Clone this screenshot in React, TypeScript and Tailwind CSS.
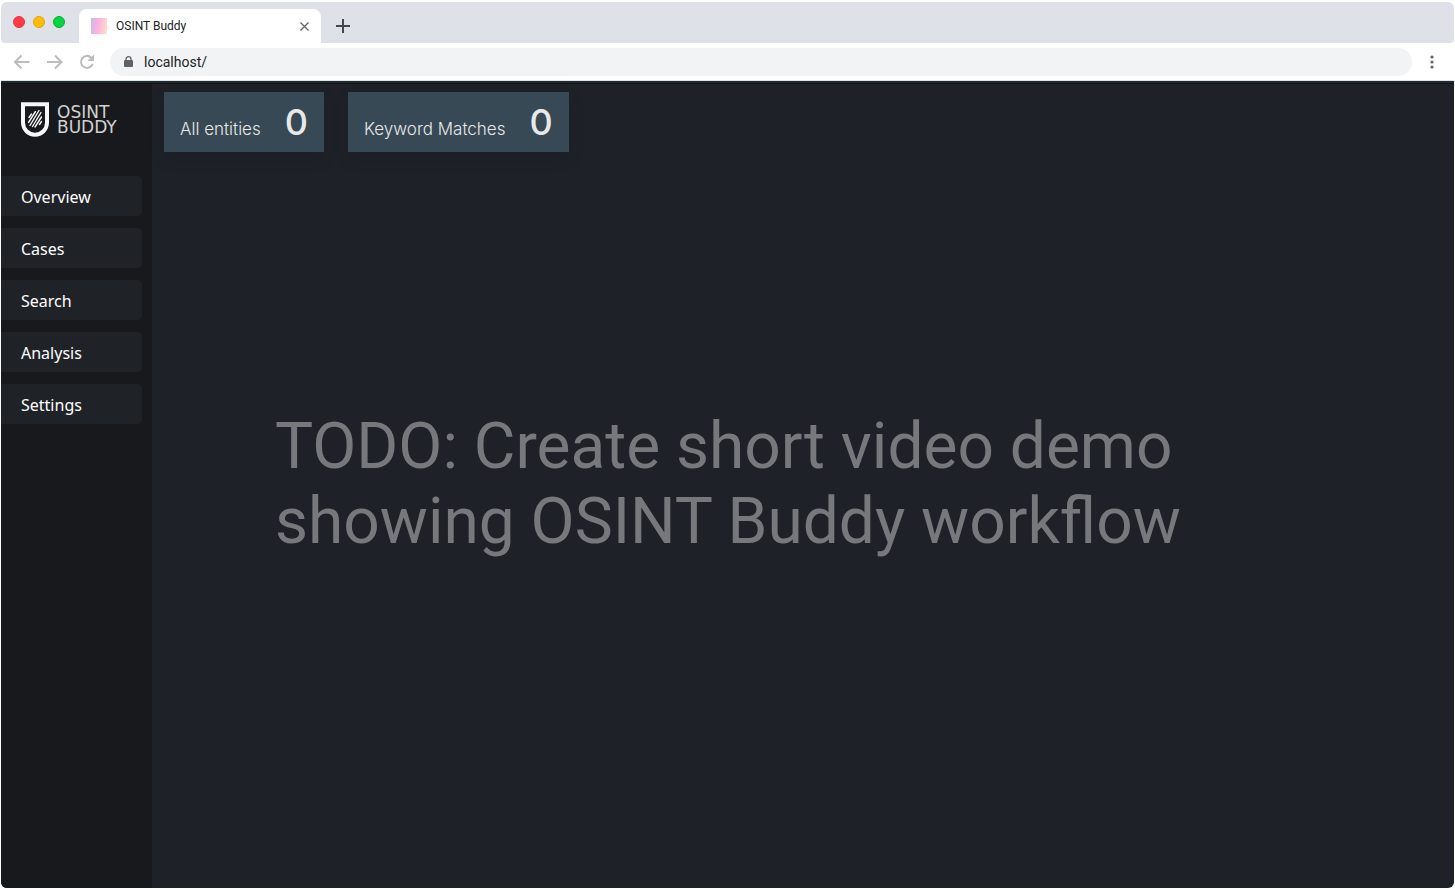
import React from "react";

const navItems = ["Overview", "Cases", "Search", "Analysis", "Settings"];

const stats = [
  { label: "All entities", value: 0 },
  { label: "Keyword Matches", value: 0 },
];

function TitleBar() {
  return (
    <div className="bg-white">
      <div className="flex h-[41px] items-end rounded-t-md rounded-b bg-[#dee1e8]">
        <div className="flex h-full w-[78px] shrink-0 items-start gap-2 pt-[14px] pl-3">
          <span className="size-3 rounded-full border border-[#e2343f] bg-[#ff3b47]" />
          <span className="size-3 rounded-full border border-[#e1a116] bg-[#ffbd00]" />
          <span className="size-3 rounded-full border border-[#12ac28] bg-[#00d742]" />
        </div>
        <div className="flex h-[34px] w-[242px] items-center rounded-t-lg bg-white px-3">
          <span className="size-4 bg-linear-100 from-[#c9b8ec] via-[#ffb3dd] to-[#ffe3c4]" />
          <span className="ml-[9px] text-[12px] leading-4 text-[#202124]">OSINT Buddy</span>
          <button type="button" aria-label="Close tab" className="ml-auto">
            <svg width="9" height="9" viewBox="0 0 9 9" stroke="#5f6368" strokeWidth="1.2">
              <path d="M0.5 0.5 8.5 8.5M8.5 0.5 0.5 8.5" />
            </svg>
          </button>
        </div>
        <div className="flex h-[34px] items-center pl-[15px]">
          <button type="button" aria-label="New tab">
            <svg width="14" height="14" viewBox="0 0 14 14" stroke="#45484d" strokeWidth="2">
              <path d="M7 0V14M0 7H14" />
            </svg>
          </button>
        </div>
      </div>
    </div>
  );
}

function Toolbar() {
  return (
    <div className="flex h-[38px] items-center border-b border-[#d5e6e9] bg-white pr-5 pl-3">
      <div className="flex w-[97px] shrink-0 items-center gap-4">
        <button type="button" aria-label="Back">
          <svg width="17" height="16" viewBox="0 0 17 16" fill="none" stroke="#babcbe" strokeWidth="2">
            <path d="M16.5 8H2.5M8.5 1.5 2 8 8.5 14.5" />
          </svg>
        </button>
        <button type="button" aria-label="Forward">
          <svg width="17" height="16" viewBox="0 0 17 16" fill="none" stroke="#babcbe" strokeWidth="2">
            <path d="M1 8H15M9 1.5 15.5 8 9 14.5" />
          </svg>
        </button>
        <button type="button" aria-label="Reload">
          <svg width="16" height="16" viewBox="0 0 16 16" fill="none" stroke="#babcbe" strokeWidth="2">
            <path d="M13.7 9.7A6 6 0 1 1 12.3 3.7L13.5 5" />
            <path d="M15 0.5V7H8.5Z" fill="#babcbe" stroke="none" />
          </svg>
        </button>
      </div>
      <div className="flex h-7 flex-1 items-center rounded-full bg-[#f1f3f4] pl-[14px]">
        <svg width="9" height="12" viewBox="0 0 9 12" aria-hidden="true">
          <path d="M2 5V3.2a2.5 2.5 0 0 1 5 0V5" fill="none" stroke="#5f6368" strokeWidth="1.3" />
          <rect x="0" y="4" width="9" height="7" rx="1" fill="#5f6368" />
        </svg>
        <input
          type="text"
          aria-label="Address"
          defaultValue="localhost/"
          className="ml-[11px] min-w-0 flex-1 bg-transparent text-[14px] leading-5 text-[#202124] outline-none"
        />
      </div>
      <button type="button" aria-label="Menu" className="ml-[18px]">
        <svg width="4" height="14" viewBox="0 0 4 14" fill="#5f6368">
          <circle cx="2" cy="2" r="1.6" />
          <circle cx="2" cy="7" r="1.6" />
          <circle cx="2" cy="12" r="1.6" />
        </svg>
      </button>
    </div>
  );
}

function Logo() {
  return (
    <a href="#" className="flex items-center gap-2">
      <svg width="28" height="35" viewBox="0 0 28 35" fill="none" aria-hidden="true">
        <path
          d="M2 2.3H26V20.5C26 27.5 20.5 32.7 14 32.7S2 27.5 2 20.5Z"
          stroke="#f7f7f7"
          strokeWidth="4"
        />
        <path
          d="M8 15.5 10.5 12M7.5 20.5 14.5 9.5M9 23.5 18 8.5M11.500 24.500 20 10.500M14 25 20.500 15M18.500 22.500 20.500 19.500"
          stroke="#f7f7f7"
          strokeWidth="1.4"
          strokeLinecap="round"
        />
      </svg>
      <span className="flex flex-col font-['DejaVu_Sans',sans-serif] text-[17px] leading-[15px] text-[#d2d2d0]">
        <span>OSINT</span>
        <span>BUDDY</span>
      </span>
    </a>
  );
}

function Sidebar() {
  return (
    <aside className="w-[151px] shrink-0 bg-[#17191d] pt-[18px]">
      <div className="pl-5">
        <Logo />
      </div>
      <nav className="mt-[39px] flex flex-col gap-3 pr-[10px]">
        {navItems.map((item) => (
          <a
            key={item}
            href="#"
            className="flex h-10 items-center rounded-r bg-[#1f2327] pt-[2px] pl-5 font-['Noto_Sans',sans-serif] text-[16px] leading-6 text-white"
          >
            {item}
          </a>
        ))}
      </nav>
    </aside>
  );
}

export default function App() {
  return (
    <div className="flex min-h-screen flex-col bg-white px-px pt-[2px] pb-px font-[Roboto,sans-serif]">
      <TitleBar />
      <Toolbar />
      <div className="flex flex-1 flex-col overflow-hidden rounded-b-md border-t-2 border-[#24272d] bg-[#1e2128]">
        <div className="flex flex-1 border-t border-[#111317]">
          <Sidebar />
          <main className="flex flex-1 flex-col">
            <section className="flex gap-6 pt-2 pl-3">
              {stats.map((stat) => (
                <div
                  key={stat.label}
                  className="flex h-[60px] items-end gap-6 bg-[#364954] px-4 text-[#e8e8e8] shadow-[0_6px_16px_rgba(0,0,0,0.1)]"
                >
                  <span className="pb-[11px] font-[Inter,sans-serif] text-[17px] leading-6 font-light">{stat.label}</span>
                  <span className="pb-2 font-[Inter,sans-serif] text-[36px] leading-[44px] font-medium">{stat.value}</span>
                </div>
              ))}
            </section>
            <p className="mt-[257px] ml-[123px] max-w-[960px] text-[64px] leading-[75px] text-[#77787b]">
              TODO: Create short video demo showing OSINT Buddy workflow
            </p>
          </main>
        </div>
      </div>
    </div>
  );
}
